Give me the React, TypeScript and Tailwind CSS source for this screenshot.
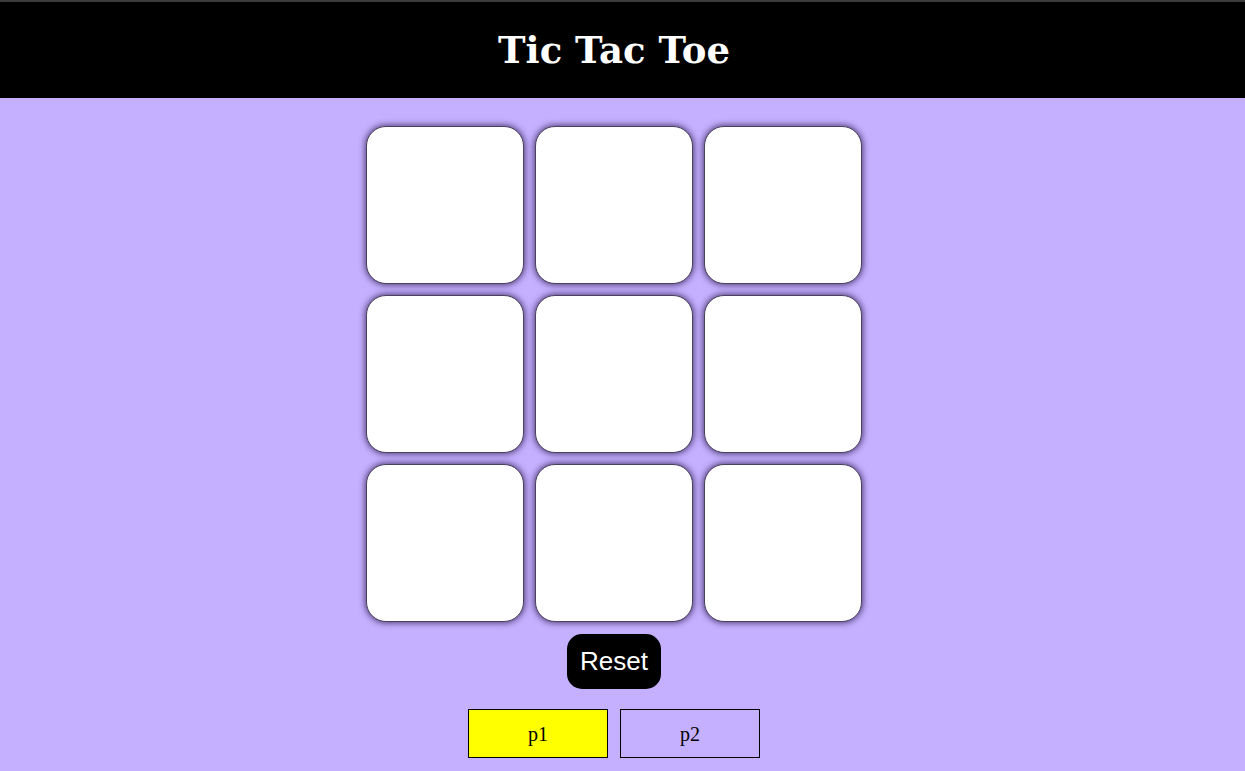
export default function App() {
  const cells = Array.from({ length: 9 }, (_, i) => i);
  return (
    <div className="min-h-[771px] bg-[#c4b0ff]" style={{ fontFamily: '"Liberation Serif", serif' }}>
      <header className="h-[98px] bg-black border-t-2 border-[#3a3a3a]">
        <div className="w-[1228px] h-full flex items-center justify-center">
          <h1 className="text-white font-bold text-[37px] leading-none" style={{ fontFamily: '"DejaVu Serif", serif' }}>
            Tic Tac Toe
          </h1>
        </div>
      </header>
      <main className="w-[1228px] flex flex-col items-center pt-[28px]">
        <div className="grid grid-cols-[repeat(3,158px)] gap-[11px]">
          {cells.map((c) => (
            <button
              key={c}
              className="w-[158px] h-[158px] bg-white border border-[#4a4060] rounded-[20px] shadow-[0_0_6px_1px_rgba(40,20,70,0.75)]"
            />
          ))}
        </div>
        <button
          className="mt-[12px] w-[94px] h-[55px] bg-black text-white rounded-[15px] text-[26px]"
          style={{ fontFamily: '"Liberation Sans", Arial, sans-serif' }}
        >
          Reset
        </button>
        <div className="mt-[20px] flex gap-[12px]">
          <div className="w-[140px] h-[49px] bg-[#ffff00] border border-black flex items-center justify-center text-[20px]">
            p1
          </div>
          <div className="w-[140px] h-[49px] border border-black flex items-center justify-center text-[20px]">
            p2
          </div>
        </div>
      </main>
    </div>
  );
}
